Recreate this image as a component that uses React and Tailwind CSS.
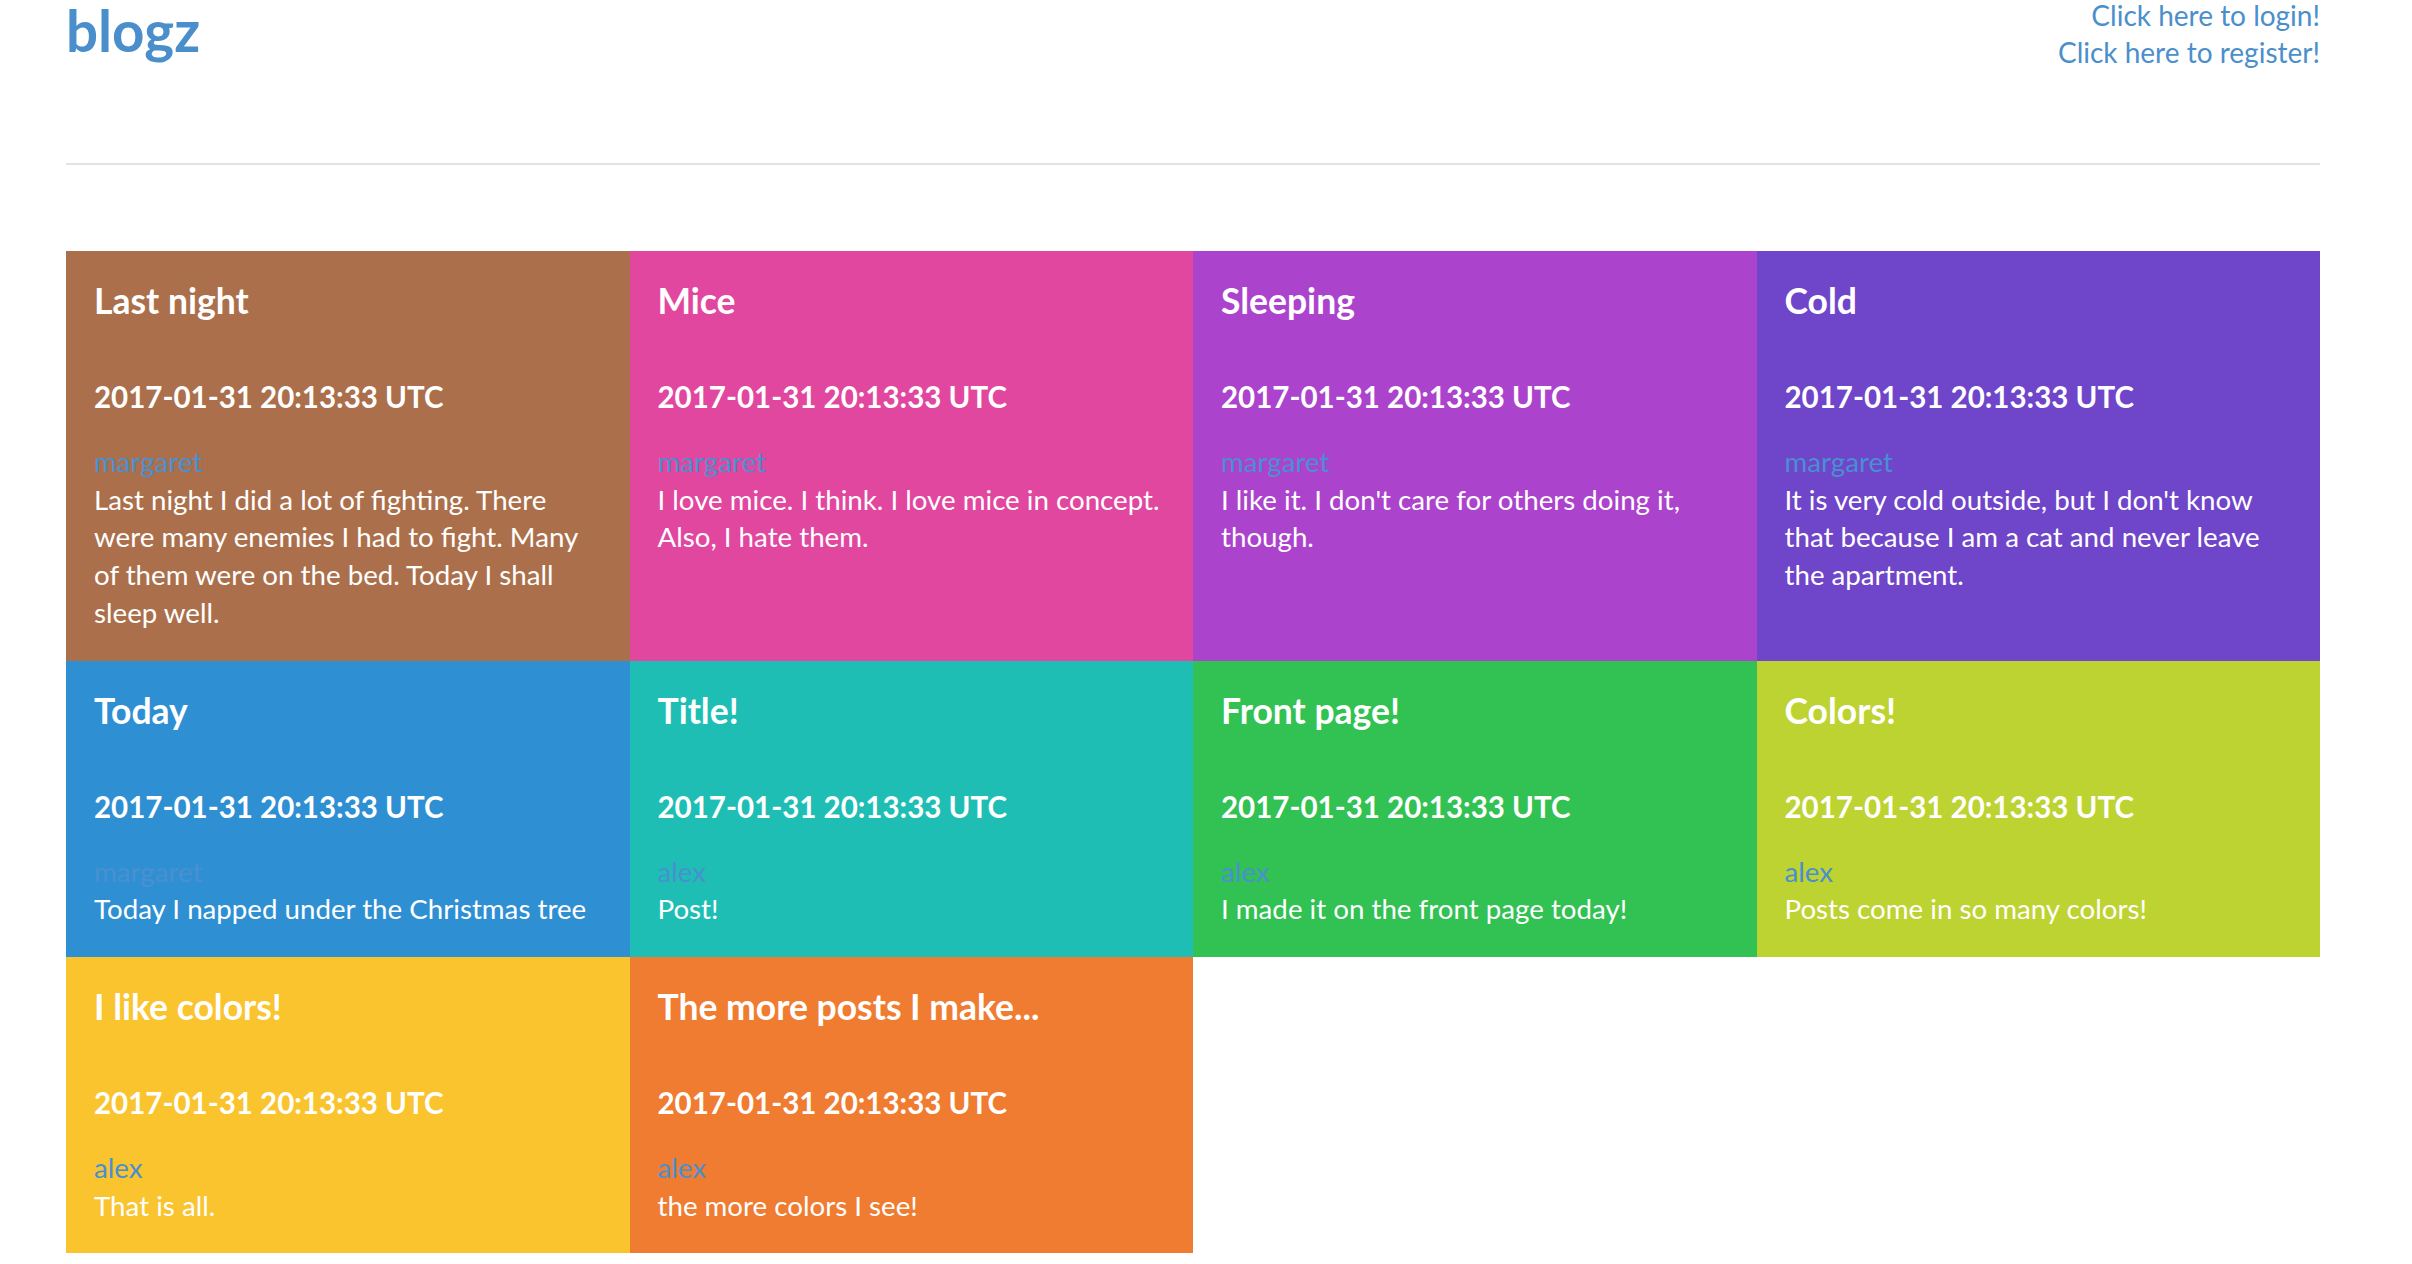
const posts = [
  { title: 'Last night', user: 'margaret', bg: 'bg-[#ab704b]', body: 'Last night I did a lot of fighting. There were many enemies I had to fight. Many of them were on the bed. Today I shall sleep well.' },
  { title: 'Mice', user: 'margaret', bg: 'bg-[#e2479f]', body: 'I love mice. I think. I love mice in concept. Also, I hate them.' },
  { title: 'Sleeping', user: 'margaret', bg: 'bg-[#ac43cc]', body: "I like it. I don't care for others doing it, though." },
  { title: 'Cold', user: 'margaret', bg: 'bg-[#6f45ca]', body: "It is very cold outside, but I don't know that because I am a cat and never leave the apartment." },
  { title: 'Today', user: 'margaret', bg: 'bg-[#2f8fd3]', body: 'Today I napped under the Christmas tree' },
  { title: 'Title!', user: 'alex', bg: 'bg-[#1fbeb5]', body: 'Post!' },
  { title: 'Front page!', user: 'alex', bg: 'bg-[#32c153]', body: 'I made it on the front page today!' },
  { title: 'Colors!', user: 'alex', bg: 'bg-[#bdd331]', body: 'Posts come in so many colors!' },
  { title: 'I like colors!', user: 'alex', bg: 'bg-[#f9c42e]', body: 'That is all.' },
  { title: 'The more posts I make...', user: 'alex', bg: 'bg-[#ef7c31]', body: 'the more colors I see!' },
];

function PostCard({ post }) {
  return (
    <div className={`${post.bg} px-[28px] pt-[30px] pb-[29px] text-white`}>
      <h3 className="text-[35.5px] leading-[40px] font-bold">{post.title}</h3>
      <h4 className="mt-[60px] text-[29.5px] leading-[32px] font-bold">2017-01-31 20:13:33 UTC</h4>
      <a href="#" className="block mt-[30px] text-[27.7px] leading-[37.7px] text-[#4a8fd0]">{post.user}</a>
      <p className="text-[27.7px] leading-[37.7px]">{post.body}</p>
    </div>
  );
}

export default function App() {
  return (
    <div className="min-h-screen bg-white font-['Lato','Open_Sans',sans-serif] pl-[66px]">
      <div className="w-[2254px]">
        {/* Header */}
        <div className="flex justify-between items-start">
          <h1 className="text-[56.5px] leading-[60px] font-bold text-[#4a8fcc]">blogz</h1>
          <div className="-mt-[3px] flex flex-col items-end text-[28px] leading-[37px] text-[#4a8fcc]">
            <a href="#">Click here to login!</a>
            <a href="#">Click here to register!</a>
          </div>
        </div>
        <hr className="mt-[92px] border-0 h-[2px] bg-[#e2e2e2]" />

        {/* Posts */}
        <div className="mt-[86px] grid grid-cols-4">
          {posts.map((p) => (
            <PostCard key={p.title} post={p} />
          ))}
        </div>
      </div>
    </div>
  );
}
